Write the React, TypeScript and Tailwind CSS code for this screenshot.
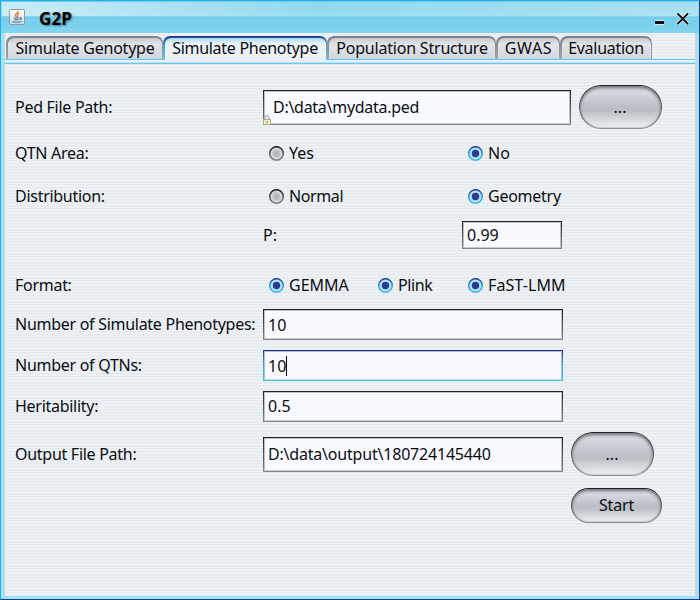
import React from "react";

const tabs = [
  { label: "Simulate Genotype", box: "w-[157px]", text: "pl-px tracking-[-0.23px]" },
  { label: "Simulate Phenotype", box: "w-[164px]", text: "tracking-[-0.28px]", active: true },
  { label: "Population Structure", box: "w-[169px]", text: "pl-px tracking-[-0.2px]" },
  { label: "GWAS", box: "w-[64px]", text: "pl-px tracking-[0.6px]" },
  { label: "Evaluation", box: "w-[92px]", text: "tracking-[-0.28px]" },
];

function Tab({ label, box, text, active }: { label: string; box: string; text: string; active?: boolean }) {
  return (
    <div
      className={`${box} ${
        active
          ? "relative -mb-px h-[24px] bg-linear-to-b from-[#25338f] via-[#46a9dc] via-40% to-[#5fc9ec]"
          : "h-[23px] bg-linear-to-b from-[#7f8388] to-[#a0a5aa]"
      } shrink-0 rounded-t-[7px] px-[1.5px] pt-[1.7px]`}
    >
      <div
        className={`flex h-full items-center justify-center rounded-t-[6px] leading-none whitespace-nowrap ${
          active
            ? "bg-linear-to-b from-[#a0dbf2] via-[#eaf3f8] via-25% to-[#edf1f5] pb-px"
            : "bg-linear-to-b from-[#c6cacf] via-[#e1e4e8] via-30% to-[#d3d6dc]"
        }`}
      >
        <span className={text}>{label}</span>
      </div>
    </div>
  );
}

function Label({ children, className = "" }: { children: React.ReactNode; className?: string }) {
  return <span className={`w-[248px] shrink-0 tracking-[-0.28px] whitespace-nowrap ${className}`}>{children}</span>;
}

function Field({
  children,
  box,
  focus,
  pad = "pl-[3px]",
}: {
  children: React.ReactNode;
  box: string;
  focus?: boolean;
  pad?: string;
}) {
  return (
    <div
      className={`${box} relative shrink-0 p-px ${
        focus
          ? "bg-linear-to-b from-[#242f8c] via-[#2fa5da] via-45% to-[#45c0e6]"
          : "bg-linear-to-b from-[#1e2226] to-[#85898d]"
      }`}
    >
      <div
        className={`flex h-full items-center border whitespace-nowrap ${
          focus ? "border-[#b4bcd8] border-b-[#c8d9e4]" : "border-[#bfc1c6] border-b-[#c9cbd0]"
        } bg-[#f9faff] ${pad}`}
      >
        {children}
      </div>
    </div>
  );
}

function Radio({ label, on, box, text = "" }: { label: string; on?: boolean; box: string; text?: string }) {
  return (
    <span className={`${box} flex shrink-0 items-center gap-[4px] whitespace-nowrap`}>
      <svg width="16" height="16" viewBox="0 0 16 16" className="shrink-0">
        <defs>
          <linearGradient id="ringOn" x1="0" y1="0" x2="0" y2="1">
            <stop offset="0" stopColor="#28469c" />
            <stop offset="0.55" stopColor="#2da4dc" />
            <stop offset="1" stopColor="#42bfe6" />
          </linearGradient>
          <linearGradient id="ringOff" x1="0" y1="0" x2="0" y2="1">
            <stop offset="0" stopColor="#1d2125" />
            <stop offset="0.5" stopColor="#54585c" />
            <stop offset="1" stopColor="#85898d" />
          </linearGradient>
          <radialGradient id="fillOff">
            <stop offset="0" stopColor="#adb1b8" />
            <stop offset="0.45" stopColor="#bbbfc5" />
            <stop offset="0.75" stopColor="#dadde1" />
            <stop offset="1" stopColor="#b5b9be" />
          </radialGradient>
        </defs>
        <circle
          cx="7.5"
          cy="7.5"
          r="6.8"
          fill={on ? "#b4e4f4" : "url(#fillOff)"}
          stroke={on ? "url(#ringOn)" : "url(#ringOff)"}
          strokeWidth="1.5"
        />
        {on && <circle cx="7.5" cy="7.5" r="3.7" fill="#293b95" />}
      </svg>
      <span className={`pb-[2px] ${text}`}>{label}</span>
    </span>
  );
}

function Pill({ children, box }: { children: React.ReactNode; box: string }) {
  return (
    <button className={`${box} shrink-0 rounded-full bg-linear-to-b from-[#1d2125] to-[#8c9094] p-[1.4px]`}>
      <span className="flex h-full items-center justify-center rounded-full bg-[linear-gradient(to_bottom,#c9ccd2_0%,#d6d9df_15%,#bcc1c8_48%,#bcc0c5_60%,#f0f1f3_100%)] shadow-[inset_0_2px_3px_#777c82,inset_0_0_2px_#85898e]">
        {children}
      </span>
    </button>
  );
}

export default function App() {
  return (
    <div className="flex h-[600px] w-[700px] flex-col overflow-hidden border border-t-[#20afe8] border-r-[#1d3b8c] border-b-[#1d3b8c] border-l-[#20afe8] bg-[#9fe2f4] font-['Noto_Sans','Open_Sans',sans-serif] text-[16px] leading-none text-[#0c0c10]">
      <header className="flex h-[32px] shrink-0 items-center bg-[linear-gradient(to_bottom,#58c4ea_0px,#8ed8ee_1px,#9bdcef_15px,#76cdec_16px,#82d5ef_32px)] pl-[8px]">
        <div className="absolute top-[2px] left-[2px] h-[14px] w-[696px] bg-linear-to-r from-white/50 via-transparent via-45% to-white/20" />
        <svg width="16" height="16" viewBox="0 0 16 16" className="relative">
          <defs>
            <linearGradient id="tile" x1="0" y1="0" x2="0" y2="1">
              <stop offset="0" stopColor="#fff" />
              <stop offset="1" stopColor="#ccdbe3" />
            </linearGradient>
          </defs>
          <rect x="0.5" y="0.5" width="15" height="15" rx="1" fill="url(#tile)" stroke="#879aa5" />
          <path
            d="M9.2 1.8C10 4 6 4.6 6.3 6.2c.2.8 1.2 1.2 1 2M10.3 4.3C8 5.2 8 6 8.5 6.7c.5.7 0 1.2-.5 1.6"
            fill="none"
            stroke="#e8772a"
            strokeWidth="1.2"
          />
          <path
            d="M4.5 9h6M5.2 10.7h5M10.8 9c2.3-.6 2 1.3.2 1.8M3.3 12.6c2 .9 7 .9 9.2 0"
            fill="none"
            stroke="#43749a"
            strokeWidth="1.1"
          />
        </svg>
        <span className="relative mt-[3px] ml-[14px] text-[17px] font-bold tracking-[0.1px] text-black [text-shadow:1px_1px_2px_#47778b]">
          G2P
        </span>
        <svg width="38" height="16" viewBox="0 0 38 16" className="relative mt-[4px] mr-[8px] ml-auto">
          <path d="M2 11.5h9" stroke="#fff" strokeOpacity=".6" strokeWidth="5" />
          <path d="M2 11.5h9" stroke="#111" strokeWidth="3" />
          <path d="M24.5 2.5l10.500 10.500M35 2.500l-10.500 10.500" stroke="#fff" strokeOpacity=".6" strokeWidth="3.6" />
          <path d="M24.5 2.5l10.500 10.500M35 2.500l-10.500 10.500" stroke="#111" strokeWidth="1.8" />
        </svg>
      </header>

      <div className="mr-[3px] mb-[3px] ml-[3px] flex min-h-0 grow flex-col border-x border-[#ccd7df] bg-[repeating-linear-gradient(to_bottom,#eff3f6_0px,#eff3f6_1px,#e4eaee_1px,#e4eaee_2px,#e9eef2_2px,#e9eef2_3px)]">
        <nav className="flex h-[26px] shrink-0 items-end pt-[3px] pl-[1px]">
          {tabs.map((t) => (
            <Tab key={t.label} {...t} />
          ))}
        </nav>
        <div className="h-[5px] shrink-0 bg-[linear-gradient(to_bottom,#68c9ec_0px,#68c9ec_1px,#d5edf6_1px,#eff5f9_2px,#e9f2f7_3px,#b4e0f0_3px,#b4e0f0_4px,#68c9ec_4px)]" />

        <main className="flex flex-col pt-[21px] pl-[10px]">
          <div className="flex h-[44px] items-center">
            <Label>Ped File Path:</Label>
            <Field box="h-[35px] w-[308px]" pad="pl-[8px]">
              <span className="tracking-[-0.28px]">D:\data\mydata.ped</span>
              <svg width="8" height="10" viewBox="0 0 8 10" className="absolute bottom-0 left-0">
                <path d="M2 5V2.5a2 2 0 0 1 4 0V5" fill="none" stroke="#9a9a92" />
                <rect x="0.5" y="4.5" width="7" height="5" fill="#f0f0c8" stroke="#aaa98e" />
                <path d="M4 6v2" stroke="#77776a" />
              </svg>
            </Field>
            <Pill box="ml-[8px] h-[44px] w-[83px]">
              <span className="pr-px">...</span>
            </Pill>
          </div>
          <div className="mt-[13px] flex h-[23px] items-center">
            <Label className="pb-[2px]">QTN Area:</Label>
            <Radio box="ml-[6px] w-[199px]" label="Yes" />
            <Radio box="" label="No" on />
          </div>
          <div className="mt-[20px] flex h-[23px] items-center">
            <Label className="pb-[2px]">Distribution:</Label>
            <Radio box="ml-[6px] w-[199px]" label="Normal" text="tracking-[-0.4px]" />
            <Radio box="" label="Geometry" on text="tracking-[-0.25px]" />
          </div>
          <div className="mt-[13px] flex h-[28px] items-center">
            <span className="ml-[248px] w-[199px]">P:</span>
            <Field box="h-[28px] w-[100px]">0.99</Field>
          </div>
          <div className="mt-[25px] flex h-[23px] items-center">
            <Label className="pb-[2px]">Format:</Label>
            <Radio box="ml-[6px] w-[109px]" label="GEMMA" on />
            <Radio box="w-[90px]" label="Plink" on text="tracking-[-0.4px]" />
            <Radio box="" label="FaST-LMM" on text="tracking-[0.1px]" />
          </div>
          <div className="mt-[12px] flex h-[31px] items-center">
            <Label className="pb-px">Number of Simulate Phenotypes:</Label>
            <Field box="h-[31px] w-[300px]">10</Field>
          </div>
          <div className="mt-[10px] flex h-[31px] items-center">
            <Label className="pb-px">Number of QTNs:</Label>
            <Field box="h-[31px] w-[300px]" focus>
              10
              <span className="h-[20px] w-px bg-black" />
            </Field>
          </div>
          <div className="mt-[10px] flex h-[31px] items-center">
            <Label className="pb-px tracking-[-0.1px]">Heritability:</Label>
            <Field box="h-[31px] w-[300px]">
              <span className="pb-px">0.5</span>
            </Field>
          </div>
          <div className="mt-[10px] flex h-[44px] items-center">
            <Label>Output File Path:</Label>
            <Field box="h-[35px] w-[300px]">
              <span className="tracking-[-0.2px]">D:\data\output\180724145440</span>
            </Field>
            <Pill box="ml-[8px] h-[44px] w-[83px]">
              <span className="pr-px">...</span>
            </Pill>
          </div>
          <div className="mt-[12px] flex pl-[556px]">
            <Pill box="h-[35px] w-[91px]">
              <span className="pb-px tracking-[-0.15px]">Start</span>
            </Pill>
          </div>
        </main>
      </div>
    </div>
  );
}
